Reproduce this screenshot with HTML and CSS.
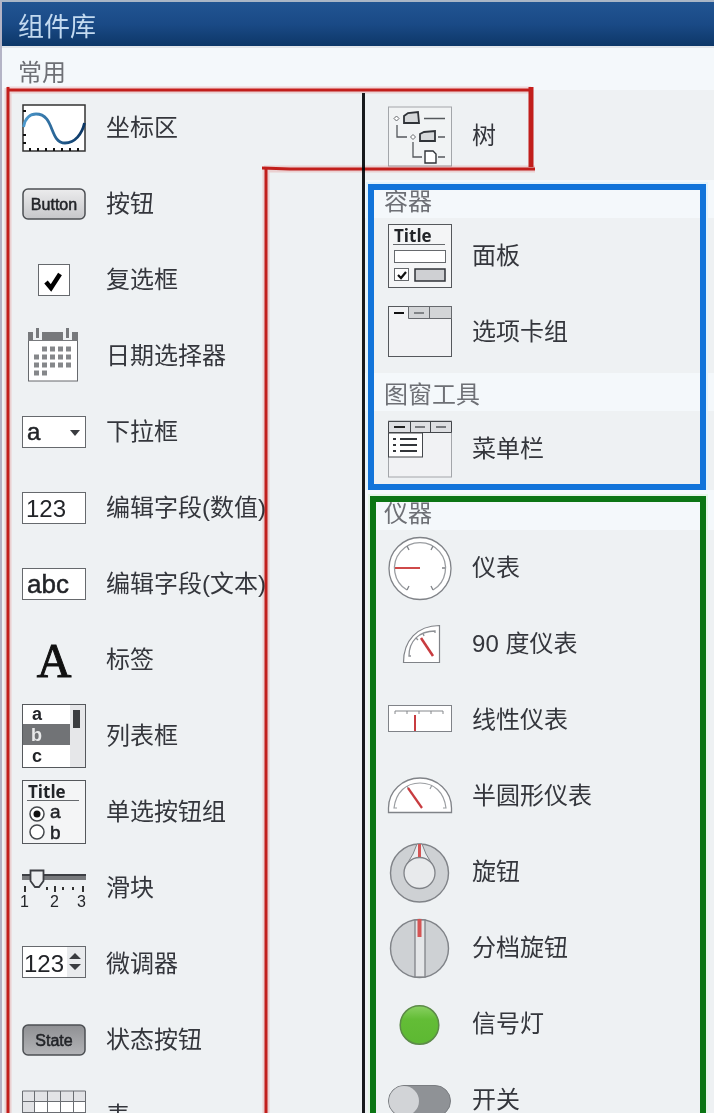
FILE: index.html
```html
<!DOCTYPE html>
<html lang="zh-CN">
<head>
    <meta charset="UTF-8">
    <meta name="viewport" content="width=device-width, initial-scale=1.0">
    <title>组件库</title>
    <link rel="stylesheet" href="styles.css">
</head>
<body>
    <main class="library">
        <h1 class="library-title">组件库</h1>
        <h2 class="group-title group-title-main">常用</h2>

        <div class="columns">
            <ul class="list list-common">
                <li class="item">
                    <svg class="icon" viewBox="0 0 64 64" aria-hidden="true">
                        <defs>
                            <linearGradient id="wave" x1="0" y1="0" x2="1" y2="0">
                                <stop offset="0" stop-color="#4d9ace"/>
                                <stop offset="1" stop-color="#0a3563"/>
                            </linearGradient>
                        </defs>
                        <rect x="1" y="9" width="62" height="46" fill="#fff" stroke="#333" stroke-width="1.5"/>
                        <path d="M1.500 31C3 21 9 18 14 18c19 0 13 29 29 29 10 0 17-9 19.500-20" fill="none" stroke="url(#wave)" stroke-width="2.800"/>
                        <path d="M8 52v3M16 52v3M24 52v3M32 52v3M40 52v3M48 52v3M56 52v3M1 15h3M1 39h3M1 47h3" stroke="#111" stroke-width="2"/>
                    </svg>
                    <span>坐标区</span>
                </li>
                <li class="item">
                    <svg class="icon" viewBox="0 0 64 64" aria-hidden="true">
                        <defs>
                            <linearGradient id="face" x1="0" y1="0" x2="0" y2="1">
                                <stop offset="0" stop-color="#ececed"/>
                                <stop offset="1" stop-color="#c6c7ca"/>
                            </linearGradient>
                        </defs>
                        <rect x="1" y="17" width="62" height="30" rx="5" fill="url(#face)" stroke="#4c4f53" stroke-width="1.500"/>
                        <text class="glyph strong" x="32" y="38" font-size="16" text-anchor="middle">Button</text>
                    </svg>
                    <span>按钮</span>
                </li>
                <li class="item">
                    <svg class="icon" viewBox="0 0 64 64" aria-hidden="true">
                        <rect class="box" x="16.500" y="16.500" width="31" height="31"/>
                        <path d="M24 34l5 6 9-14" fill="none" stroke="#000" stroke-width="4.500"/>
                    </svg>
                    <span>复选框</span>
                </li>
                <li class="item">
                    <svg class="icon" viewBox="0 0 64 64" aria-hidden="true">
                        <rect x="6.500" y="14" width="49" height="43" fill="#fff" stroke="#66696d"/>
                        <path d="M6 8h50v9H6z" fill="#77797c"/>
                        <path d="M11 5h9v11h-9zM41 5h9v11h-9z" fill="#eef1f3"/>
                        <path d="M15.500 4v10M45.500 4v10" stroke="#77797c" stroke-width="3"/>
                        <path d="M20 25h31" stroke="#85878a" stroke-width="5" stroke-dasharray="5 3"/>
                        <path d="M12 33h39M12 41h39" stroke="#85878a" stroke-width="5" stroke-dasharray="5 3"/>
                        <path d="M12 49h14" stroke="#85878a" stroke-width="5" stroke-dasharray="5 3"/>
                    </svg>
                    <span>日期选择器</span>
                </li>
                <li class="item">
                    <svg class="icon" viewBox="0 0 64 64" aria-hidden="true">
                        <rect class="box" x="0.500" y="16.500" width="63" height="31"/>
                        <text class="glyph strong" x="5" y="40" font-size="24">a</text>
                        <path d="M48 30h10l-5 6z" fill="#3a3c40"/>
                    </svg>
                    <span>下拉框</span>
                </li>
                <li class="item">
                    <svg class="icon" viewBox="0 0 64 64" aria-hidden="true">
                        <rect class="box" x="0.500" y="16.500" width="63" height="31"/>
                        <text class="glyph" x="4" y="41" font-size="24">123</text>
                    </svg>
                    <span>编辑字段(数值)</span>
                </li>
                <li class="item">
                    <svg class="icon" viewBox="0 0 64 64" aria-hidden="true">
                        <rect class="box" x="0.500" y="16.500" width="63" height="31"/>
                        <text class="glyph strong" x="5" y="41" font-size="26">abc</text>
                    </svg>
                    <span>编辑字段(文本)</span>
                </li>
                <li class="item">
                    <svg class="icon" viewBox="0 0 64 64" aria-hidden="true">
                        <text class="serif" x="32" y="49" font-size="48" text-anchor="middle">A</text>
                    </svg>
                    <span>标签</span>
                </li>
                <li class="item">
                    <svg class="icon" viewBox="0 0 64 64" aria-hidden="true">
                        <rect x="0.500" y="0.500" width="63" height="63" fill="#fff" stroke="#55585c"/>
                        <rect x="48" y="1" width="15" height="62" fill="#e6e7e9"/>
                        <rect x="1" y="20" width="47" height="21" fill="#717376"/>
                        <rect x="51" y="6" width="7" height="18" fill="#3b3d40"/>
                        <text class="glyph bold" x="10" y="16" font-size="18">a</text>
                        <text class="glyph bold light" x="9" y="37" font-size="18">b</text>
                        <text class="glyph bold" x="10" y="58" font-size="18">c</text>
                    </svg>
                    <span>列表框</span>
                </li>
                <li class="item">
                    <svg class="icon" viewBox="0 0 64 64" aria-hidden="true">
                        <rect x="0.500" y="0.500" width="63" height="63" fill="#f4f5f6" stroke="#55585c"/>
                        <text class="glyph title" x="6" y="18" font-size="17">Title</text>
                        <path d="M5 20.500h52" stroke="#66696d"/>
                        <circle cx="15" cy="34" r="7" fill="#fff" stroke="#44474b" stroke-width="1.500"/>
                        <circle cx="15" cy="34" r="3.500" fill="#111"/>
                        <circle cx="15" cy="52" r="7" fill="#fff" stroke="#44474b" stroke-width="1.500"/>
                        <text class="glyph strong" x="28" y="38" font-size="19">a</text>
                        <text class="glyph strong" x="28" y="59" font-size="19">b</text>
                    </svg>
                    <span>单选按钮组</span>
                </li>
                <li class="item">
                    <svg class="icon" viewBox="0 0 64 64" aria-hidden="true">
                        <path d="M0 21h64" stroke="#77797c" stroke-width="6"/>
                        <path d="M0 19h64" stroke="#3d3f44" stroke-width="2"/>
                        <path d="M8.500 14.500h13V25L17 31h-4l-4.500-6z" fill="#eceef0" stroke="#3d3f44" stroke-width="1.800"/>
                        <path d="M3 30v6M33 30v6M61 30v6M25 31v3M41 31v3M51 31v3" stroke="#333" stroke-width="2"/>
                        <text class="glyph" x="-2" y="51" font-size="16">1</text>
                        <text class="glyph" x="28" y="51" font-size="16">2</text>
                        <text class="glyph" x="55" y="51" font-size="16">3</text>
                    </svg>
                    <span>滑块</span>
                </li>
                <li class="item">
                    <svg class="icon" viewBox="0 0 64 64" aria-hidden="true">
                        <rect class="box" x="0.500" y="14.500" width="63" height="31"/>
                        <rect x="45" y="15" width="18" height="30" fill="#e9ebed"/>
                        <text class="glyph" x="2" y="40" font-size="24">123</text>
                        <path d="M47 27h12l-6-6zM47 32h12l-6 6z" fill="#3a3c40"/>
                    </svg>
                    <span>微调器</span>
                </li>
                <li class="item">
                    <svg class="icon" viewBox="0 0 64 64" aria-hidden="true">
                        <defs>
                            <linearGradient id="pressed" x1="0" y1="0" x2="0" y2="1">
                                <stop offset="0" stop-color="#8f9093"/>
                                <stop offset="1" stop-color="#b3b4b7"/>
                            </linearGradient>
                        </defs>
                        <rect x="1" y="17" width="62" height="30" rx="5" fill="url(#pressed)" stroke="#4c4f53" stroke-width="1.500"/>
                        <text class="glyph strong" x="32" y="38" font-size="16" text-anchor="middle">State</text>
                    </svg>
                    <span>状态按钮</span>
                </li>
                <li class="item">
                    <svg class="icon" viewBox="0 0 64 64" aria-hidden="true">
                        <rect x="0.500" y="7" width="63" height="50" fill="#fff"/>
                        <path d="M1 7h62v10H13v40H1z" fill="#e2e3e6"/>
                        <path d="M0.500 7h63v50h-63zM12.500 7v50M25.500 7v50M38.500 7v50M51.500 7v50M0 17.500h64M0 28.500h64M0 38.500h64M0 48.500h64" fill="none" stroke="#6a6d72"/>
                    </svg>
                    <span>表</span>
                </li>
            </ul>

            <div class="column-right">
                <ul class="list list-extra">
                    <li class="item">
                        <svg class="icon" viewBox="0 0 64 64" aria-hidden="true">
                            <rect x="0.500" y="3" width="63" height="59" fill="#f1f3f4" stroke="#a3a6aa"/>
                            <path d="M9 21v12h10M25 38v15h9M36 14.500h21M50 33h7M50 53h7" fill="none" stroke="#55585c" stroke-width="1.300"/>
                            <path d="M8.500 12l2.500 2.500-2.500 2.500L6 14.500zM25 30.500l2.500 2.500-2.500 2.500-2.500-2.500z" fill="#fff" stroke="#66696d"/>
                            <path d="M16 19v-7l4-3 10-1 1 11zM32 37v-7l4-2 11-1v10z" fill="#d6d8da" stroke="#303338" stroke-width="1.800"/>
                            <path d="M37 47h8l3 3v9H37z" fill="#fff" stroke="#303338" stroke-width="1.400"/>
                        </svg>
                        <span>树</span>
                    </li>
                </ul>

                <div class="marked marked-blue">
                    <section class="group">
                        <h2 class="group-title">容器</h2>
                        <ul class="list">
                            <li class="item">
                                <svg class="icon" viewBox="0 0 64 64" aria-hidden="true">
                                    <rect x="0.500" y="0.500" width="63" height="63" fill="#f4f5f6" stroke="#55585c"/>
                                    <text class="glyph title" x="6" y="18" font-size="17">Title</text>
                                    <path d="M5 20.500h52" stroke="#66696d"/>
                                    <rect class="box" x="6.500" y="26.500" width="51" height="12"/>
                                    <rect class="box" x="6.500" y="44.500" width="14" height="12"/>
                                    <path d="M10 51l3 3 5-6" fill="none" stroke="#111" stroke-width="2.200"/>
                                    <rect x="27" y="45" width="30" height="12" fill="#cfd0d3" stroke="#303338" stroke-width="1.500"/>
                                </svg>
                                <span>面板</span>
                            </li>
                            <li class="item">
                                <svg class="icon" viewBox="0 0 64 64" aria-hidden="true">
                                    <rect x="0.500" y="6.500" width="63" height="50" fill="#f1f2f4" stroke="#55585c"/>
                                    <path d="M20.500 6.500h43v12h-43zM41.500 7v11" fill="#d3d5d7" stroke="#66696d"/>
                                    <path d="M6 13h10" stroke="#111" stroke-width="2"/>
                                    <path d="M26 13h10" stroke="#66696d" stroke-width="1.500"/>
                                </svg>
                                <span>选项卡组</span>
                            </li>
                        </ul>
                    </section>
                    <section class="group">
                        <h2 class="group-title">图窗工具</h2>
                        <ul class="list">
                            <li class="item">
                                <svg class="icon" viewBox="0 0 64 64" aria-hidden="true">
                                    <rect x="0.500" y="4" width="63" height="56" fill="#f1f2f4" stroke="#a3a6aa"/>
                                    <path d="M0.500 4.500h63v11h-63zM22.500 5v10M42.500 5v10" fill="#dedfe2" stroke="#44474b"/>
                                    <path d="M6 10h11" stroke="#222" stroke-width="2"/>
                                    <path d="M27 10h10M48 10h10" stroke="#55585c" stroke-width="1.500"/>
                                    <rect x="0.500" y="16" width="34" height="24" fill="#fff" stroke="#44474b"/>
                                    <path d="M5 22h3M5 28h3M5 34h3M12 22h17M12 28h17M12 34h17" stroke="#33363a" stroke-width="2"/>
                                </svg>
                                <span>菜单栏</span>
                            </li>
                        </ul>
                    </section>
                </div>

                <div class="marked marked-green">
                    <section class="group">
                        <h2 class="group-title">仪器</h2>
                        <ul class="list">
                            <li class="item">
                                <svg class="icon" viewBox="0 0 64 64" aria-hidden="true">
                                    <circle cx="32" cy="32.500" r="31" fill="#fff" stroke="#808388" stroke-width="1.300"/>
                                    <path d="M19 54A25.500 25.500 0 1 1 45 54" fill="none" stroke="#9a9da1" stroke-width="1.300"/>
                                    <path d="M19 54l2-4M45 54l-2-4M19 10l2 4M45 10l-2 4M54 32h3" stroke="#808388" stroke-width="1.300"/>
                                    <path d="M7 32h25" stroke="#cf4a4a" stroke-width="2"/>
                                </svg>
                                <span>仪表</span>
                            </li>
                            <li class="item">
                                <svg class="icon" viewBox="0 0 64 64" aria-hidden="true">
                                    <path d="M15.500 50.500C15.500 29 29 13.500 51.500 13.500v37z" fill="#fff" stroke="#808388" stroke-width="1.200"/>
                                    <path d="M23 44h-2C21 29 31 19 47 19v2M28 26l2 2M35 21l1 3" fill="none" stroke="#8d9095" stroke-width="1.300"/>
                                    <path d="M33 26l12 18" stroke="#c83c40" stroke-width="2.500"/>
                                </svg>
                                <span>90 度仪表</span>
                            </li>
                            <li class="item">
                                <svg class="icon" viewBox="0 0 64 64" aria-hidden="true">
                                    <rect x="0.500" y="17.500" width="63" height="26" fill="#fff" stroke="#808388"/>
                                    <path d="M7 26v-3h48v3M19 23v3M31 23v3M43 23v3" fill="none" stroke="#85888c"/>
                                    <path d="M27 27v16" stroke="#c83c40" stroke-width="2"/>
                                </svg>
                                <span>线性仪表</span>
                            </li>
                            <li class="item">
                                <svg class="icon" viewBox="0 0 64 64" aria-hidden="true">
                                    <path d="M0.500 48.500V44a31.500 30 0 0 1 63 0v4.500z" fill="#fff" stroke="#808388" stroke-width="1.300"/>
                                    <path d="M9 44H6C8 28 18 19 32 19s24 9 26 25h-3M19 22l2 4M44 21l-2 4" fill="none" stroke="#9a9da1" stroke-width="1.200"/>
                                    <path d="M20 24l14 20" stroke="#c83c40" stroke-width="2.200"/>
                                </svg>
                                <span>半圆形仪表</span>
                            </li>
                            <li class="item">
                                <svg class="icon" viewBox="0 0 64 64" aria-hidden="true">
                                    <circle cx="31.500" cy="33" r="29" fill="#ced1d4" stroke="#808388" stroke-width="1.400"/>
                                    <path d="M29 4h5l4 10 6 10H19l6-10z" fill="#ebedef" stroke="#808388"/>
                                    <circle cx="31.500" cy="33" r="15.500" fill="#e8eaec" stroke="#808388" stroke-width="1.300"/>
                                    <path d="M31.500 4v13" stroke="#d45555" stroke-width="3"/>
                                </svg>
                                <span>旋钮</span>
                            </li>
                            <li class="item">
                                <svg class="icon" viewBox="0 0 64 64" aria-hidden="true">
                                    <circle cx="31.500" cy="32.500" r="29" fill="#ced1d4" stroke="#808388" stroke-width="1.400"/>
                                    <rect x="27" y="4" width="10" height="57" fill="#e4e6e8" stroke="#808388" stroke-width="1.300"/>
                                    <path d="M31.500 3v18" stroke="#d45555" stroke-width="4"/>
                                </svg>
                                <span>分档旋钮</span>
                            </li>
                            <li class="item">
                                <svg class="icon" viewBox="0 0 64 64" aria-hidden="true">
                                    <defs>
                                        <linearGradient id="lamp" x1="0" y1="0" x2="0" y2="1">
                                            <stop offset="0" stop-color="#8ad163"/>
                                            <stop offset="0.350" stop-color="#63bd36"/>
                                            <stop offset="1" stop-color="#5db832"/>
                                        </linearGradient>
                                    </defs>
                                    <circle cx="31.500" cy="33" r="19.300" fill="url(#lamp)" stroke="#5c8a48" stroke-width="1.500"/>
                                </svg>
                                <span>信号灯</span>
                            </li>
                            <li class="item">
                                <svg class="icon" viewBox="0 0 64 64" aria-hidden="true">
                                    <rect x="0.500" y="17.500" width="62" height="31" rx="15.500" fill="#8f9296" stroke="#7a7d81"/>
                                    <circle cx="16" cy="33" r="15" fill="#d2d4d7"/>
                                </svg>
                                <span>开关</span>
                            </li>
                        </ul>
                    </section>
                </div>
            </div>
        </div>

        <!-- hand drawn outline round the common components -->
        <svg class="outline" aria-hidden="true">
            <g class="outline-halo">
                <path d="M7 90h524M264 169h271"/>
                <line x1="8" y1="88" x2="8" y2="100%"/>
                <line x1="266" y1="168" x2="266" y2="100%"/>
            </g>
            <path d="M7 90h524M262 168l28 1h245"/>
            <line x1="8" y1="87" x2="8" y2="100%"/>
            <line x1="266" y1="168" x2="266" y2="100%"/>
            <path class="outline-thick" d="M531 87v80"/>
        </svg>
    </main>
</body>
</html>
```

FILE: styles.css
```css
* {
    box-sizing: border-box;
}

body {
    margin: 0;
    font-family: "Liberation Sans", "Noto Sans CJK SC", sans-serif;
    color: #34363c;
    background-color: #eef1f3;
}

.library {
    position: relative;
    height: 100vh;
    overflow: hidden;
    border-top: 2px solid #a9b6c6;
    border-left: 2px solid #b4b4c6;
}

.library-title {
    display: flex;
    align-items: center;
    height: 44px;
    margin: 0;
    padding: 0 16px;
    font-size: 26px;
    font-weight: normal;
    color: #c3daf0;
    background: linear-gradient(#215592, #1a4a86 50%, #0d3768);
}

.group-title {
    display: flex;
    align-items: center;
    height: 38px;
    margin: 0;
    padding: 6px 19px 0;
    font-size: 24px;
    line-height: 28px;
    font-weight: normal;
    color: #6e7076;
    background-color: #f4f8fb;
}

.group-title-main {
    height: 44px;
    padding: 8px 16px 0;
    border-top: 2px solid #e2e6eb;
}

.columns {
    display: flex;
}

.list {
    margin: 0;
    padding: 0 0 3px 23px;
    list-style: none;
}

.list-common {
    flex: 0 0 51%;
    padding-left: 20px;
    border-right: 3px solid #17191c;
    border-image: linear-gradient(transparent 4px, #17191c 4px) 1;
}

.list-extra {
    padding-top: 8px;
    padding-bottom: 6px;
}

.column-right {
    flex: 1;
}

.item {
    display: flex;
    align-items: center;
    gap: 20px;
    height: 76px;
    font-size: 24px;
    line-height: 28px;
    white-space: nowrap;
}

.icon {
    flex: none;
    width: 64px;
    height: 64px;
    overflow: visible;
}

.box {
    fill: #fff;
    stroke: #66696d;
}

.glyph {
    font-family: "Liberation Sans", sans-serif;
    fill: #222428;
}

.strong {
    stroke: #222428;
    stroke-width: 0.5px;
}

.bold {
    font-weight: bold;
}

.light {
    fill: #e8e9ea;
}

.title {
    font-family: "Open Sans", sans-serif;
    font-weight: bold;
}

.serif {
    font-family: "Liberation Serif", serif;
    fill: #111;
    stroke: #111;
    stroke-width: 1px;
}

/* coloured frames over the groups */
.marked {
    position: relative;
}

.marked::after {
    content: "";
    position: absolute;
    inset: 4px 8px 0 3px;
    border: 6px solid #1274da;
    box-shadow: 0 0 0 2px #e3f4fd;
    pointer-events: none;
}

.marked-green .group-title {
    height: 40px;
    padding-top: 8px;
}

.marked-green::after {
    inset: 6px 8px 0 5px;
    border-color: #0b7514;
    box-shadow: 0 0 0 2px #e6f6e8;
}

.outline {
    position: absolute;
    top: -2px;
    left: -2px;
    width: 100%;
    height: calc(100% + 2px);
    fill: none;
    stroke: #cf1f1c;
    stroke-width: 3px;
    pointer-events: none;
    mix-blend-mode: multiply;
}

.outline-halo {
    stroke: #fbdcdc;
    stroke-width: 7px;
}

.outline-thick {
    stroke-width: 5px;
}
```
